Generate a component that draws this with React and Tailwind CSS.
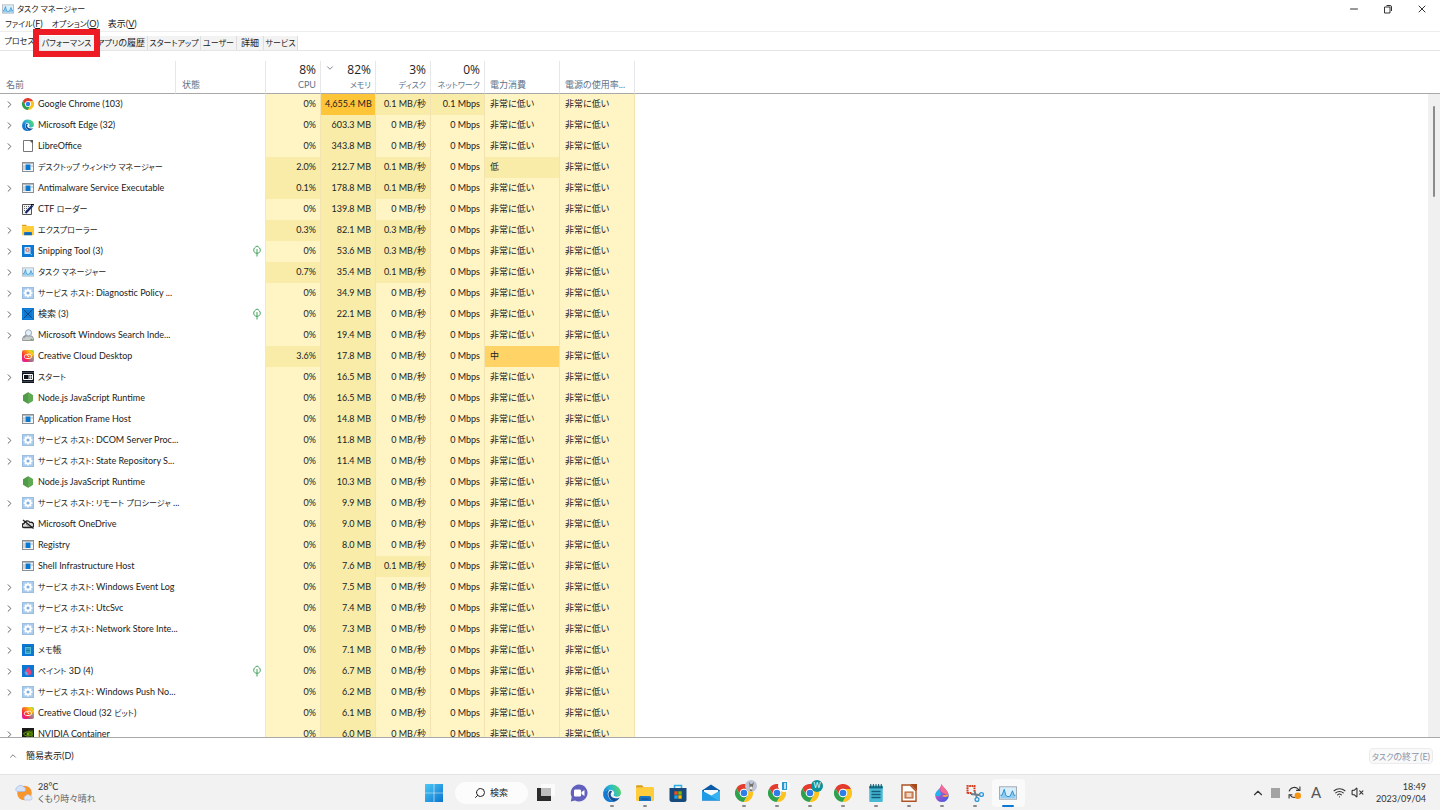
import { useState } from 'react';
import clsx from 'clsx';
import { ChevronRight, ChevronDown, ChevronUp, Search, Wifi, VolumeX, X, Minus } from 'lucide-react';

const LOW = '非常に低い';

const processes = [
  { name: 'Google Chrome (103)', icon: 'chrome', mem: '4,655.4', disk: '0.1', net: '0.1', open: true },
  { name: 'Microsoft Edge (32)', icon: 'edge', mem: '603.3', open: true },
  { name: 'LibreOffice', icon: 'file', mem: '343.8', open: true },
  { name: 'デスクトップ ウィンドウ マネージャー', icon: 'app', cpu: '2.0', mem: '212.7', disk: '0.1', power: '低' },
  { name: 'Antimalware Service Executable', icon: 'app', cpu: '0.1', mem: '178.8', disk: '0.1', open: true },
  { name: 'CTF ローダー', icon: 'ctf', mem: '139.8' },
  { name: 'エクスプローラー', icon: 'folder', cpu: '0.3', mem: '82.1', disk: '0.3', open: true },
  { name: 'Snipping Tool (3)', icon: 'snip', mem: '53.6', disk: '0.3', open: true, leaf: true },
  { name: 'タスク マネージャー', icon: 'taskmgr', cpu: '0.7', mem: '35.4', disk: '0.1', open: true },
  { name: 'サービス ホスト: Diagnostic Policy ...', icon: 'gear', mem: '34.9', open: true },
  { name: '検索 (3)', icon: 'search', mem: '22.1', open: true, leaf: true },
  { name: 'Microsoft Windows Search Inde...', icon: 'indexer', mem: '19.4', open: true },
  { name: 'Creative Cloud Desktop', icon: 'cc', cpu: '3.6', mem: '17.8', power: '中' },
  { name: 'スタート', icon: 'start', mem: '16.5', open: true },
  { name: 'Node.js JavaScript Runtime', icon: 'node', mem: '16.5' },
  { name: 'Application Frame Host', icon: 'app', mem: '14.8' },
  { name: 'サービス ホスト: DCOM Server Proc...', icon: 'gear', mem: '11.8', open: true },
  { name: 'サービス ホスト: State Repository S...', icon: 'gear', mem: '11.4', open: true },
  { name: 'Node.js JavaScript Runtime', icon: 'node', mem: '10.3' },
  { name: 'サービス ホスト: リモート プロシージャ ...', icon: 'gear', mem: '9.9', open: true },
  { name: 'Microsoft OneDrive', icon: 'onedrive', mem: '9.0' },
  { name: 'Registry', icon: 'app', mem: '8.0' },
  { name: 'Shell Infrastructure Host', icon: 'app', mem: '7.6', disk: '0.1' },
  { name: 'サービス ホスト: Windows Event Log', icon: 'gear', mem: '7.5', open: true },
  { name: 'サービス ホスト: UtcSvc', icon: 'gear', mem: '7.4', open: true },
  { name: 'サービス ホスト: Network Store Inte...', icon: 'gear', mem: '7.3', open: true },
  { name: 'メモ帳', icon: 'notepad', mem: '7.1', open: true },
  { name: 'ペイント 3D (4)', icon: 'paint', mem: '6.7', open: true, leaf: true },
  { name: 'サービス ホスト: Windows Push No...', icon: 'gear', mem: '6.2', open: true },
  { name: 'Creative Cloud (32 ビット)', icon: 'cc', mem: '6.1' },
  { name: 'NVIDIA Container', icon: 'nvidia', mem: '6.0', open: true },
];

const tabs = [
  { label: 'プロセス', width: 'w-[39px]' },
  { label: 'パフォーマンス', width: 'w-[56px]' },
  { label: 'アプリの履歴', width: 'w-[53px]' },
  { label: 'スタートアップ', width: 'w-[53px]' },
  { label: 'ユーザー', width: 'w-[36px]' },
  { label: '詳細', width: 'w-[27px]' },
  { label: 'サービス', width: 'w-[34px]' },
];

// katakana is set one size smaller than the rest of the label
function Label({ text }) {
  return (
    <span className="whitespace-pre">
      {text.split(/([ァ-ヺー]+)/).map((part, i) =>
        i % 2 ? <span key={i} className="text-[8px]">{part}</span> : part
      )}
    </span>
  );
}

function ChromeIcon({ className }) {
  return (
    <svg viewBox="0 0 24 24" className={className}>
      <path d="M1.9 5.5A12 12 0 0 1 22.7 6.5H12A5.5 5.5 0 0 0 7.2 14.75Z" fill="#e33b2e" />
      <path d="M22.7 6.5A12 12 0 0 1 11.4 24L16.8 14.75A5.5 5.5 0 0 0 12 6.5Z" fill="#fcc31e" />
      <path d="M11.4 24A12 12 0 0 1 1.9 5.5L7.2 14.75A5.5 5.5 0 0 0 16.8 14.75Z" fill="#2da14c" />
      <circle cx="12" cy="12" r="5.7" fill="#fff" />
      <circle cx="12" cy="12" r="4.4" fill="#2f7de9" />
    </svg>
  );
}

function EdgeIcon({ className }) {
  return (
    <svg viewBox="0 0 24 24" className={className}>
      <defs>
        <linearGradient id="edgeTop" x1="0" y1="0.6" x2="1" y2="0.3">
          <stop offset="0" stopColor="#1683d8" />
          <stop offset="0.5" stopColor="#2bbccb" />
          <stop offset="1" stopColor="#5fd65a" />
        </linearGradient>
      </defs>
      <path d="M.2 11A12 12 0 0 1 24 11.5C24 15 21.4 17 18.4 17C15.4 17 14 15.8 14 14.8C14 14 15 13.6 15 12C15 9.6 12.4 7.6 9 7.6C4.5 7.6 1 10.5.2 14Z" fill="url(#edgeTop)" />
      <path d="M.2 14C.6 10 4.5 7.6 9 7.6C7 9 6 11.5 6.4 14.4C7 18.5 10.5 22 15 23.5C7 26 0 20.5.2 14Z" fill="#1479cf" />
      <path d="M9.6 9C8 10 7 12 7.2 14.2C7.6 19 12 22.5 15 23.6C18.5 22.6 21.3 20.2 22.4 18C17.5 20.6 10 18.5 10.3 13.6C10.4 12 11.2 11 12.2 10.4C11.6 9.4 10.6 9 9.6 9Z" fill="#124f9c" />
    </svg>
  );
}

function FolderIcon({ className }) {
  return (
    <svg viewBox="0 0 24 24" className={className}>
      <path d="M0 3Q0 1.5 1.5 1.5H8L11 5H0Z" fill="#dc9f12" />
      <path d="M0 5H9L11 4H22.5Q24 4 24 5.5V21Q24 22.5 22.5 22.5H1.5Q0 22.5 0 21Z" fill="#ffcd3c" />
      <path d="M4 22.5V18Q4 16 6 16H18Q20 16 20 18V22.5Z" fill="#1976c5" />
      <path d="M7 20H17" stroke="#0d4f91" strokeWidth="1.5" />
    </svg>
  );
}

function MonitorIcon({ className }) {
  return (
    <svg viewBox="0 0 24 18" className={className}>
      <rect x=".7" y=".7" width="22.6" height="16.6" fill="#d9eefb" stroke="#a5adb5" strokeWidth="1.4" />
      <path d="M2 16V12L4 12L7 4L9 12L12 14L15 13L18 6L20 12H22V16Z" fill="#8dccf0" />
      <path d="M2 12H4L7 4L9 12L12 14L15 13L18 6L20 12H22" fill="none" stroke="#2788c9" strokeWidth="1.2" />
    </svg>
  );
}

function DropIcon({ className }) {
  return (
    <svg viewBox="0 0 24 24" className={className}>
      <defs>
        <linearGradient id="drop" x1="0.2" y1="0.3" x2="0.8" y2="1">
          <stop offset="0" stopColor="#e85aa8" />
          <stop offset="0.5" stopColor="#8a55d6" />
          <stop offset="1" stopColor="#3b5fe0" />
        </linearGradient>
      </defs>
      <path d="M11 0C14 5 21 9.5 21 15.5A9 8.5 0 0 1 3 15.5C3 10 11 6 11 0Z" fill="url(#drop)" />
      <path d="M3 15C2.800 11 6 8.500 9 6C8 10 12 12 10 15C8 17 5 17 3 15Z" fill="#22b4f0" />
      <path d="M11 0C14 5 19.500 8.500 20.800 13.500C17 15 12 12 10 8C10.500 5 11.500 3 11 0Z" fill="#f36b8e" />
      <path d="M20.800 14C20 18 15 18 12 16C14 14 17 15 20.800 14Z" fill="#f9a33a" />
    </svg>
  );
}

function NotepadIcon({ className }) {
  return (
    <svg viewBox="0 0 24 24" className={className}>
      <rect x="3" y="2" width="18" height="22" rx="1.5" fill="#48b9d4" />
      <path d="M3 3H21V6H3Z" fill="#15718c" />
      <path d="M5 0V5M8.5 0V5M12 0V5M15.5 0V5M19 0V5" stroke="#1b5468" strokeWidth="1.3" />
      <path d="M6 10H18M6 14H18M6 18H18" stroke="#135d7a" strokeWidth="1.7" />
    </svg>
  );
}

function ProcessIcon({ type }) {
  const box = 'size-3 shrink-0';
  switch (type) {
    case 'chrome':
      return <ChromeIcon className={box} />;
    case 'edge':
      return <EdgeIcon className={box} />;
    case 'folder':
      return <FolderIcon className={box} />;
    case 'taskmgr':
      return <MonitorIcon className={box} />;
    case 'file':
      return (
        <svg viewBox="0 0 12 12" className={box}>
          <path d="M1.5.5H8L10.500 3V11.500H1.500Z" fill="#fff" stroke="#777" />
          <path d="M7.500 0H11V3.500Z" fill="#555" />
        </svg>
      );
    case 'app':
      return (
        <svg viewBox="0 0 12 12" className={box}>
          <rect x=".5" y="1.5" width="11" height="9" fill="#f4f4f4" stroke="#8a8f94" />
          <path d="M1 2.500H11" stroke="#b5babf" />
          <path d="M2 4V9M10 4V6" stroke="#aab4bd" />
          <rect x="3.500" y="3.500" width="5" height="5.500" fill="#0b78d0" />
        </svg>
      );
    case 'ctf':
      return (
        <svg viewBox="0 0 12 12" className={box}>
          <path d="M.5 1.500H9.500V11.500H.5Z" fill="#f3f3f3" stroke="#555" />
          <path d="M2 3.500H8M2 5.500H7M2 7.500H5" stroke="#666" strokeDasharray="1 1" />
          <path d="M3.500 10L10.500 2.500" stroke="#14286b" strokeWidth="2.200" />
          <path d="M9 1.500H12V3" fill="none" stroke="#111" />
        </svg>
      );
    case 'snip':
      return (
        <svg viewBox="0 0 12 12" className={box}>
          <rect width="12" height="12" fill="#0b78d4" />
          <rect x="2.500" y="2" width="6" height="7" fill="#cfe6f7" />
          <circle cx="5.500" cy="5" r="1.600" fill="none" stroke="#c8605a" />
          <path d="M6.500 7L10 10" stroke="#7fc3f3" />
        </svg>
      );
    case 'gear':
      return (
        <svg viewBox="0 0 12 12" className={box}>
          <rect x=".5" y=".5" width="11" height="11" fill="#a9cbec" stroke="#9abde0" />
          <path d="M6 1.500V10.500M1.500 6H10.500M2.800 2.800L9.200 9.200M9.200 2.800L2.800 9.200" stroke="#fff" strokeWidth="1.500" />
          <circle cx="6" cy="6" r="3.500" fill="#fff" />
          <circle cx="6" cy="6" r="1.600" fill="#7fb0e2" />
        </svg>
      );
    case 'search':
      return (
        <svg viewBox="0 0 12 12" className={box}>
          <rect width="12" height="12" fill="#0b78d4" />
          <path d="M1.500 1.500H10.500V10.500H1.500Z" fill="none" stroke="#2a8be0" strokeWidth=".6" />
          <path d="M1.500 1.500L10.500 10.500M10.500 1.500L1.500 10.500" stroke="#0a437c" strokeWidth=".9" />
        </svg>
      );
    case 'indexer':
      return (
        <svg viewBox="0 0 12 12" className={box}>
          <path d="M.5 9.500L2 7H10L11.500 9.500V11.500H.5Z" fill="#c9cdd0" stroke="#888" strokeWidth=".8" />
          <circle cx="6.500" cy="3.800" r="3.100" fill="#e1effa" stroke="#9aa8b4" />
          <path d="M4.200 6L1.500 9" stroke="#8d99a3" strokeWidth="1.300" />
          <path d="M8.500 10.300H10.500" stroke="#3fae49" />
        </svg>
      );
    case 'cc':
      return (
        <svg viewBox="0 0 12 12" className={box}>
          <defs>
            <linearGradient id="cc" x1="0" y1="1" x2="1" y2="0">
              <stop offset="0" stopColor="#e01bd0" />
              <stop offset=".3" stopColor="#f8283f" />
              <stop offset=".6" stopColor="#fb8a1c" />
              <stop offset=".8" stopColor="#f8d21c" />
              <stop offset="1" stopColor="#4bd04b" />
            </linearGradient>
          </defs>
          <rect width="12" height="12" rx="2" fill="url(#cc)" />
          <path d="M11.800 5V10A2 2 0 0 1 10 12H5Z" fill="#4a8df5" opacity=".45" />
          <path d="M4.200 8.500A1.900 1.900 0 1 1 5.500 5.200L7 7M7.800 8.500H4.200M5 4.800A2.600 2.300 0 1 1 7.800 8.500" fill="none" stroke="#fff" strokeWidth=".9" />
        </svg>
      );
    case 'start':
      return (
        <svg viewBox="0 0 12 12" className={box}>
          <rect width="12" height="12" fill="#10151d" />
          <path d="M0 1.500H12M0 10.500H12" stroke="#566273" strokeWidth=".6" />
          <path d="M1.500 3.500H10.500V8.500H1.500Z" fill="none" stroke="#fff" />
          <path d="M7 4V8M7 6H10M8.700 4V8" stroke="#fff" strokeWidth=".8" />
        </svg>
      );
    case 'node':
      return (
        <svg viewBox="0 0 12 12" className={box}>
          <path d="M6 .3L11 3.200V8.800L6 11.700L1 8.800V3.200Z" fill="#4f9b47" />
          <path d="M6 .3L11 3.200V8.800L6 11.700Z" fill="#60a955" />
        </svg>
      );
    case 'onedrive':
      return (
        <svg viewBox="0 0 12 12" className={box}>
          <path d="M2.500 9.500A2 2 0 0 1 2 5.500A3.300 3.300 0 0 1 8 4.500A2.500 2.500 0 0 1 10 9.500Z" fill="#ddd" stroke="#222" strokeWidth="1.300" />
          <path d="M1 2L11.500 10.500" stroke="#222" strokeWidth="1.300" />
          <path d="M4 6L8 9" stroke="#777" />
        </svg>
      );
    case 'notepad':
      return (
        <svg viewBox="0 0 12 12" className={box}>
          <rect width="12" height="12" fill="#0b78d4" />
          <rect x="3" y="2.500" width="6" height="7.500" fill="#4fc0e0" />
          <path d="M3 2.500H9M4 5H8M4 6.500H8M4 8H8" stroke="#14547a" strokeWidth=".7" />
        </svg>
      );
    case 'paint':
      return (
        <svg viewBox="0 0 12 12" className={box}>
          <rect width="12" height="12" fill="#0b78d4" />
          <path d="M6 1.500C7 4 9.500 5 9.500 7.500A3.400 2.800 0 0 1 2.700 7.500C2.700 5 5.500 4 6 1.500Z" fill="#e14680" />
          <path d="M2.700 7.500C3.500 5.500 5 7 6 8.500C6.500 9.500 6 10 5.500 10.200C4 10 2.700 9 2.700 7.500Z" fill="#5aa7ee" />
        </svg>
      );
    case 'nvidia':
      return (
        <svg viewBox="0 0 12 12" className={box}>
          <rect width="12" height="12" fill="#1a1a1a" />
          <path d="M1.500 6C3 3.500 8 3 10.500 6C8 9 3.500 8.500 1.500 6Z" fill="none" stroke="#76b900" />
          <circle cx="6" cy="6" r="1.500" fill="#76b900" />
          <path d="M6 2.500H11V9H9Z" fill="#5c9200" opacity=".6" />
        </svg>
      );
    default:
      return null;
  }
}

function LeafIcon() {
  return (
    <svg viewBox="0 0 8 12" className="ml-auto h-3 w-2">
      <path d="M4 1C6 2 7.300 3.500 7.300 5.200C7.300 7 6 8.300 4 8.300C2 8.300.7 7 .7 5.200C.7 3.500 2 2 4 1ZM4 4V11.500" fill="none" stroke="#3fa358" />
    </svg>
  );
}

function MetricCell({ hot, peak, warm, align = 'text-right', children }) {
  return (
    <td
      className={clsx(
        'border-r border-[#f3e3b0] px-1 pb-px whitespace-nowrap',
        align,
        peak ? 'bg-[#ffc539]' : warm ? 'bg-[#ffd366]' : hot ? 'bg-[#f9eca8]' : 'bg-[#fff4c4]'
      )}
    >
      {children}
    </td>
  );
}

function ProcessRow({ item }) {
  const { name, icon, cpu, mem, disk, net, power = LOW, open, leaf } = item;
  return (
    <tr className="h-[21px]">
      <td className="pb-px pl-1">
        <div className="flex items-center">
          <span className="flex w-[18px] shrink-0">
            {open && (
              <button aria-label={`${name} を展開`} className="text-[#555]">
                <ChevronRight className="size-[11px]" strokeWidth={2} />
              </button>
            )}
          </span>
          <ProcessIcon type={icon} />
          <span className="ml-1"><Label text={name} /></span>
        </div>
      </td>
      <td className="border-r border-gray-200 pr-1 pb-px">{leaf && <LeafIcon />}</td>
      <MetricCell hot={cpu}>{cpu || '0'}%</MetricCell>
      <MetricCell hot peak={mem.length > 6}>{mem} MB</MetricCell>
      <MetricCell hot={disk}>{disk || '0'} MB/秒</MetricCell>
      <MetricCell hot={net}>{net || '0'} Mbps</MetricCell>
      <MetricCell hot={power === '低'} warm={power === '中'} align="pl-[5px] text-left">{power}</MetricCell>
      <MetricCell align="pl-[5px] text-left">{LOW}</MetricCell>
      <td></td>
    </tr>
  );
}

function HeaderCell({ total, label, sorted, align = 'text-right' }) {
  return (
    <th scope="col" className={clsx('border-r border-b border-r-gray-200 border-b-[#a9a9a9] px-1 align-bottom font-normal', align)}>
      <div className="flex h-4 items-center">
        {sorted && <ChevronDown className="mb-1 size-[10px] text-gray-500" />}
        <span className="ml-auto font-['Open_Sans',sans-serif] text-[12px] text-[#222]">{total}</span>
      </div>
      <div className="h-[15px] text-[#5f7389]"><Label text={label} /></div>
    </th>
  );
}

function ProcessTable() {
  return (
    <table className="w-full table-fixed border-separate border-spacing-0">
      <colgroup>
        <col className="w-[176px]" />
        <col className="w-[90px]" />
        <col className="w-[55px]" />
        <col className="w-[55px]" />
        <col className="w-[55px]" />
        <col className="w-[54px]" />
        <col className="w-[75px]" />
        <col className="w-[75px]" />
        <col />
      </colgroup>
      <thead>
        <tr className="h-[33px]">
          <HeaderCell label="名前" align="pl-[6px] text-left" />
          <HeaderCell label="状態" align="pl-[6px] text-left" />
          <HeaderCell total="8%" label="CPU" />
          <HeaderCell total="82%" label="メモリ" sorted />
          <HeaderCell total="3%" label="ディスク" />
          <HeaderCell total="0%" label="ネットワーク" />
          <HeaderCell label="電力消費" align="pl-[5px] text-left" />
          <HeaderCell label="電源の使用率..." align="pl-[5px] text-left" />
          <td className="border-b border-[#a9a9a9]"></td>
        </tr>
      </thead>
      <tbody>
        {processes.map((item, i) => (
          <ProcessRow key={i} item={item} />
        ))}
      </tbody>
    </table>
  );
}

function TaskButton({ label, running, active, children }) {
  return (
    <button aria-label={label} className={clsx('flex h-7 w-[33px] flex-col items-center justify-end', active && 'rounded bg-[#fafafa]')}>
      {children}
      <span className={clsx('mt-[3px] rounded-full', active ? 'h-0.5 w-3 bg-[#0a78d4]' : 'h-0.5 w-1', running && 'bg-[#8a8a8a]')}></span>
    </button>
  );
}

function ChromeProfile({ badge }) {
  return (
    <span className="relative">
      <ChromeIcon className="size-[18px]" />
      <span className={clsx('absolute -top-1 -right-1 flex size-3 items-center justify-center rounded-full text-[7px] leading-none text-white', badge.color)}>
        {badge.content}
      </span>
    </span>
  );
}

const badges = [
  {
    color: 'bg-[#bcc4d6]',
    content: (
      <svg viewBox="0 0 12 12" className="size-3">
        <path d="M4 2L5.500 4H7L9 2L8 6L7 11H5L4.500 6Z" fill="#77716c" />
        <circle cx="6.200" cy="8" r="1.500" fill="#f1eeea" />
      </svg>
    ),
  },
  {
    color: 'bg-white',
    content: (
      <svg viewBox="0 0 12 12" className="size-3">
        <rect x="4" y="2" width="5" height="8" fill="#2c9ad0" />
        <rect x="6" y="3" width="2" height="6" fill="#bfe4f5" />
      </svg>
    ),
  },
  { color: 'bg-[#0a919c]', content: 'W' },
];

function Taskbar() {
  return (
    <footer className="grid h-9 shrink-0 grid-cols-[1fr_auto_1fr] items-center border-t border-[#e3e3e3] bg-[#f2f2f2] text-[#333]">
      <button className="flex items-center gap-1 pl-[14px] text-left">
        <svg viewBox="0 0 20 20" className="size-5">
          <circle cx="10.500" cy="10" r="7.300" fill="#f6962c" />
          <path d="M3 8.500A2.500 2.500 0 0 1 3.500 4A3.500 3.500 0 0 1 9.500 4A2.300 2.300 0 0 1 10 8.500Z" fill="#d5e2f8" stroke="#a2bdec" strokeWidth=".8" />
          <path d="M11 17A2.300 2.300 0 0 1 11.500 13A3 3 0 0 1 16.500 13A2.200 2.200 0 0 1 17 17Z" fill="#dde8fb" stroke="#b1c7ef" strokeWidth=".8" />
        </svg>
        <span className="leading-[12px]">
          <span className="block">28°C</span>
          <span className="block text-[#666]">くもり時々晴れ</span>
        </span>
      </button>

      <div className="flex items-center pl-0.5">
        <button aria-label="スタート" className="flex w-[33px] justify-center">
          <svg viewBox="0 0 18 18" className="size-[18px]">
            <defs>
              <linearGradient id="win" x1="0" y1="0" x2="1" y2="1">
                <stop offset="0" stopColor="#4cc9f7" />
                <stop offset="1" stopColor="#0a74cf" />
              </linearGradient>
            </defs>
            <path d="M0 0H8.700V8.700H0ZM9.300 0H18V8.700H9.300ZM0 9.300H8.700V18H0ZM9.300 9.300H18V18H9.300Z" fill="url(#win)" />
          </svg>
        </button>
        <button className="mr-[2px] ml-1 flex h-[22px] w-[73px] items-center justify-center gap-1 rounded-full bg-[#fcfcfc] text-[#222]">
          <Search className="size-3 -scale-x-100" strokeWidth={2} />
          検索
        </button>
        <TaskButton label="タスク ビュー">
          <svg viewBox="0 0 18 18" className="size-[18px]">
            <rect x="0" y="4" width="14" height="13" fill="#2b2b2b" />
            <rect x="4" y="0" width="14" height="12" fill="#fff" opacity=".7" />
            <rect x="4" y="4" width="10" height="8" fill="#bdbdbd" />
          </svg>
        </TaskButton>
        <TaskButton label="チャット">
          <svg viewBox="0 0 18 18" className="size-[18px]">
            <path d="M9 .5A8.500 8.500 0 1 1 5 16.500L.8 17.500L1.700 13A8.500 8.500 0 0 1 9 .5Z" fill="#6161bd" />
            <rect x="4" y="5.500" width="7" height="7" rx="1.200" fill="#fff" />
            <path d="M11.500 8L14.500 6V12L11.500 10Z" fill="#fff" />
          </svg>
        </TaskButton>
        <TaskButton label="Microsoft Edge" running>
          <EdgeIcon className="size-[18px]" />
        </TaskButton>
        <TaskButton label="エクスプローラー" running>
          <FolderIcon className="size-[18px]" />
        </TaskButton>
        <TaskButton label="Microsoft Store">
          <svg viewBox="0 0 18 18" className="size-[18px]">
            <path d="M5.500 4V1.500H12.500V4" fill="none" stroke="#2bb1e6" strokeWidth="1.500" />
            <path d="M.5 4H17.500V15.500Q17.500 18 15 18H3Q.5 18 .5 15.500Z" fill="#174a7c" />
            <path d="M5.300 7.300H8.700V10.700H5.300Z" fill="#f25022" />
            <path d="M9.300 7.300H12.700V10.700H9.300Z" fill="#7fba00" />
            <path d="M5.300 11.300H8.700V14.700H5.300Z" fill="#20a5ef" />
            <path d="M9.300 11.300H12.700V14.700H9.300Z" fill="#ffb900" />
          </svg>
        </TaskButton>
        <TaskButton label="メール">
          <svg viewBox="0 0 18 18" className="size-[18px]">
            <path d="M0 6.500L9 .5L18 6.500V16.500H0Z" fill="#0d5ba8" />
            <path d="M2 6H16V11L9 14L2 11Z" fill="#f4f8fb" />
            <path d="M0 6.500L18 16.500H0Z" fill="#1e9be6" />
            <path d="M18 6.500L8.500 12L16 16.500H18Z" fill="#35b2f0" />
          </svg>
        </TaskButton>
        {badges.map((badge, i) => (
          <TaskButton key={i} label={`Google Chrome ${i + 1}`} running>
            <ChromeProfile badge={badge} />
          </TaskButton>
        ))}
        <TaskButton label="Google Chrome" running>
          <ChromeIcon className="size-[18px]" />
        </TaskButton>
        <TaskButton label="メモ帳" running>
          <NotepadIcon className="size-[18px]" />
        </TaskButton>
        <TaskButton label="LibreOffice Impress" running>
          <svg viewBox="0 0 18 18" className="size-[18px]">
            <path d="M2 1H10L16 7V17.300H2Z" fill="#fff" stroke="#ad5222" strokeWidth="1.400" />
            <path d="M10 0H17V7Z" fill="#a8481b" />
            <rect x="5" y="8" width="8" height="6" fill="#e3a985" stroke="#b35a2a" />
            <path d="M7 10H11M7 12H11" stroke="#fff" />
          </svg>
        </TaskButton>
        <TaskButton label="ペイント 3D" running>
          <DropIcon className="size-[18px]" />
        </TaskButton>
        <TaskButton label="Snipping Tool" running>
          <svg viewBox="0 0 18 18" className="size-[18px]">
            <path d="M1.500 9.500V2H8.500V8M1.500 9H6" fill="none" stroke="#d23c1e" strokeWidth="2" strokeDasharray="1.700 .6" />
            <path d="M5 10L13.500 11M8.500 7L11 14" stroke="#6b7a86" strokeWidth="1.800" />
            <circle cx="15.500" cy="10.500" r="1.900" fill="none" stroke="#2b9bdc" strokeWidth="1.400" />
            <circle cx="11" cy="15.500" r="1.900" fill="none" stroke="#2b9bdc" strokeWidth="1.400" />
          </svg>
        </TaskButton>
        <TaskButton label="タスク マネージャー" active>
          <MonitorIcon className="size-[18px]" />
        </TaskButton>
      </div>

      <div className="flex items-center justify-end pr-[14px]">
        <button aria-label="隠れているインジケーターを表示">
          <ChevronUp className="size-[14px]" strokeWidth={2} />
        </button>
        <span className="ml-[6px] h-[10px] w-[9px] bg-[#a3a3a3]"></span>
        <svg viewBox="0 0 12 12" className="ml-2 size-[13px]">
          <path d="M1 5A5 5 0 0 1 10 3.500M11 .5V4H7.500M10.500 8A5 5 0 0 1 2 8.500M1 11.500V8H4" fill="none" stroke="#333" />
          <circle cx="9" cy="9" r="3" fill="#f7930f" />
        </svg>
        <span className="ml-[10px] text-[15px] leading-none text-[#555]">A</span>
        <button aria-label="ネットワークとサウンド" className="ml-3 flex gap-[5px]">
          <Wifi className="size-[13px]" strokeWidth={2} />
          <VolumeX className="size-[13px]" strokeWidth={2} />
        </button>
        <time className="ml-3 text-right leading-[12px]">
          <span className="block">18:49</span>
          <span className="block">2023/09/04</span>
        </time>
      </div>
    </footer>
  );
}

export default function App() {
  const [activeTab, setActiveTab] = useState('プロセス');

  return (
    <main className="flex h-screen flex-col overflow-hidden bg-white font-['Lato','Noto_Sans_CJK_JP',sans-serif] text-[9px] leading-[14px] text-[#222] [font-feature-settings:'palt']">
      <header className="flex h-[17px] shrink-0 items-center">
        <MonitorIcon className="ml-0.5 size-3" />
        <h1 className="ml-[3px]"><Label text="タスク マネージャー" /></h1>
        <div className="mr-3 ml-auto flex gap-[22px] text-[#333]">
          <button aria-label="最小化"><Minus className="size-3" /></button>
          <button aria-label="元に戻す">
            <svg viewBox="0 0 12 12" className="size-3">
              <path d="M2.500 4H8V10H2.500ZM4.500 2.500H8Q9.500 2.500 9.500 4V8" fill="none" stroke="#333" />
            </svg>
          </button>
          <button aria-label="閉じる"><X className="size-3" /></button>
        </div>
      </header>

      <nav className="flex h-[15px] shrink-0 items-center gap-[9px] border-b border-[#ededed] pl-[5px]">
        <button><Label text="ファイル(" /><u>F</u>)</button>
        <button><Label text="オプション(" /><u>O</u>)</button>
        <button>表示(<u>V</u>)</button>
      </nav>

      <div role="tablist" className="flex h-[19px] shrink-0 items-end border-b border-[#e5e5e5]">
        {tabs.map((tab) => (
          <button
            key={tab.label}
            role="tab"
            aria-selected={tab.label === activeTab}
            onClick={() => setActiveTab(tab.label)}
            className={clsx(
              'relative flex shrink-0 items-center justify-center whitespace-nowrap',
              tab.width,
              tab.label === activeTab ? 'h-4 bg-white pb-0.5' : 'h-[14px] border-r border-[#dedede] bg-[#f3f3f3]'
            )}
          >
            <Label text={tab.label} />
            {tab.label === 'パフォーマンス' && (
              <span className="absolute -inset-x-[6px] -top-[7px] z-10 h-7 border-[6px] border-[#ed1c24]"></span>
            )}
          </button>
        ))}
      </div>

      <section className="mt-[10px] flex min-h-0 flex-1 overflow-hidden border-b border-[#a9a9a9]">
        <div className="min-w-0 flex-1">
          <ProcessTable />
        </div>
        <div className="mt-8 w-3 border-t border-[#a9a9a9] bg-[#f0f0f0] pt-3">
          <div className="mx-auto h-[91px] w-0.5 rounded bg-[#8c8c8c]"></div>
        </div>
      </section>

      <div className="flex h-9 shrink-0 items-center justify-between pr-[7px] pl-2">
        <button className="flex items-center gap-2">
          <ChevronUp className="size-[10px] text-[#666]" />
          <span>簡易表示(D)</span>
        </button>
        <button disabled className="h-4 rounded-sm border border-[#ececec] bg-[#f9f9f9] px-0.5 leading-none text-[#8c93a8]">
          <Label text="タスクの終了(E)" />
        </button>
      </div>

      <Taskbar />
    </main>
  );
}
